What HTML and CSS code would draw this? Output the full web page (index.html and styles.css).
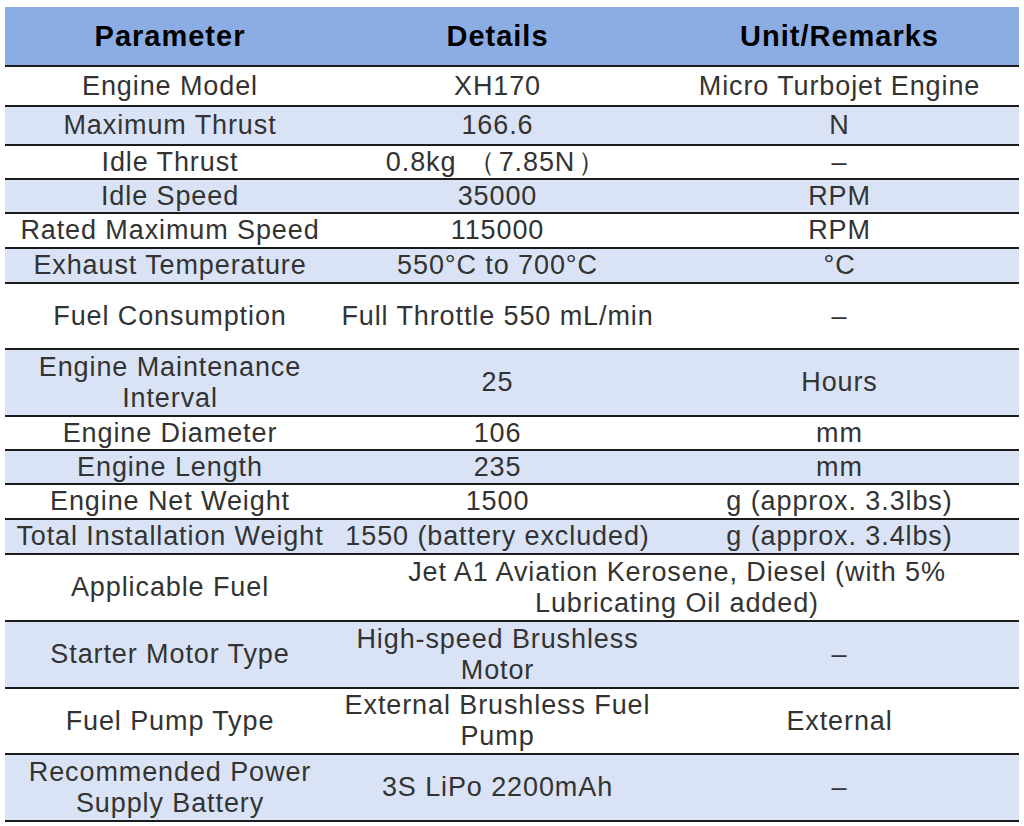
FILE: index.html
```html
<!DOCTYPE html>
<html lang="en">
<head>
<meta charset="utf-8">
<title>XH170 Specifications</title>
<link rel="stylesheet" href="styles.css">
</head>
<body>
<table class="spec">
  <colgroup>
    <col class="c1">
    <col class="c2">
    <col class="c3">
  </colgroup>
  <thead>
    <tr class="head">
      <th>Parameter</th>
      <th>Details</th>
      <th>Unit/Remarks</th>
    </tr>
  </thead>
  <tbody>
    <tr class="r40"><td>Engine Model</td><td>XH170</td><td>Micro Turbojet Engine</td></tr>
    <tr class="r39 alt"><td>Maximum Thrust</td><td>166.6</td><td>N</td></tr>
    <tr class="r34"><td>Idle Thrust</td><td>0.8kg <span class="paren">（</span>7.85N<span class="paren">）</span></td><td>–</td></tr>
    <tr class="r34 alt"><td>Idle Speed</td><td>35000</td><td>RPM</td></tr>
    <tr class="r35"><td>Rated Maximum Speed</td><td>115000</td><td>RPM</td></tr>
    <tr class="r35 alt"><td>Exhaust Temperature</td><td>550°C to 700°C</td><td>°C</td></tr>
    <tr class="r66"><td>Fuel Consumption</td><td>Full Throttle 550 mL/min</td><td>–</td></tr>
    <tr class="r67 alt"><td>Engine Maintenance<br>Interval</td><td>25</td><td>Hours</td></tr>
    <tr class="r34"><td>Engine Diameter</td><td>106</td><td>mm</td></tr>
    <tr class="r34 alt"><td>Engine Length</td><td>235</td><td>mm</td></tr>
    <tr class="r35"><td>Engine Net Weight</td><td>1500</td><td>g (approx. 3.3lbs)</td></tr>
    <tr class="r35 alt"><td>Total Installation Weight</td><td>1550 (battery excluded)</td><td>g (approx. 3.4lbs)</td></tr>
    <tr class="r67"><td>Applicable Fuel</td><td colspan="2">Jet A1 Aviation Kerosene, Diesel (with 5%<br>Lubricating Oil added)</td></tr>
    <tr class="r67 alt"><td>Starter Motor Type</td><td>High-speed Brushless<br>Motor</td><td>–</td></tr>
    <tr class="r66"><td>Fuel Pump Type</td><td>External Brushless Fuel<br>Pump</td><td>External</td></tr>
    <tr class="r67 alt"><td>Recommended Power<br>Supply Battery</td><td>3S LiPo 2200mAh</td><td>–</td></tr>
  </tbody>
</table>
</body>
</html>
```

FILE: styles.css
```css
html, body {
  margin: 0;
  padding: 0;
  background: #ffffff;
}

body {
  padding: 7px 5px 0 5px;
  font-family: "Liberation Sans", Arial, sans-serif;
}

.spec {
  width: 1014px;
  border-collapse: collapse;
  border-spacing: 0;
  table-layout: fixed;
}

.c1 { width: 330px; }
.c2 { width: 325px; }
.c3 { width: 359px; }

.spec th,
.spec td {
  padding: 0;
  text-align: center;
  vertical-align: middle;
  white-space: nowrap;
  border-bottom: 2px solid #1c1c1c;
}

.head th {
  height: 58px;
  background: #8cade3;
  color: #000000;
  font-weight: bold;
  font-size: 29px;
  letter-spacing: 1px;
  line-height: 32px;
}

.spec td {
  color: #333333;
  font-size: 27px;
  letter-spacing: 0.9px;
  line-height: 31px;
}

.paren {
  margin: 0 3px;
}

.alt td {
  background: #d9e3f5;
}

.r34 td { height: 32px; }
.r35 td { height: 33px; }
.r39 td { height: 37px; }
.r40 td { height: 38px; }
.r66 td { height: 64px; }
.r67 td { height: 65px; }
```
